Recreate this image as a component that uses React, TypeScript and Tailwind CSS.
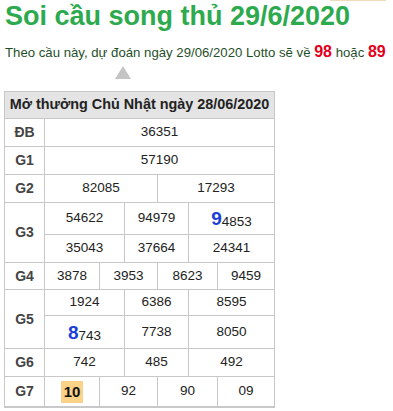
import React from "react";

type Cell = { v: string; w: number; hl?: "big" | "tag" };

const ROWS: { label: string; lines: Cell[][]; heights: number[] }[] = [
  { label: "ĐB", lines: [[{ v: "36351", w: 229 }]], heights: [27] },
  { label: "G1", lines: [[{ v: "57190", w: 229 }]], heights: [27] },
  {
    label: "G2",
    lines: [[{ v: "82085", w: 113 }, { v: "17293", w: 116 }]],
    heights: [27],
  },
  {
    label: "G3",
    lines: [
      [
        { v: "54622", w: 80 },
        { v: "94979", w: 64 },
        { v: "94853", w: 85, hl: "big" },
      ],
      [
        { v: "35043", w: 80 },
        { v: "37664", w: 64 },
        { v: "24341", w: 85 },
      ],
    ],
    heights: [32, 27],
  },
  {
    label: "G4",
    lines: [
      [
        { v: "3878", w: 55 },
        { v: "3953", w: 58 },
        { v: "8623", w: 60 },
        { v: "9459", w: 56 },
      ],
    ],
    heights: [26],
  },
  {
    label: "G5",
    lines: [
      [
        { v: "1924", w: 80 },
        { v: "6386", w: 64 },
        { v: "8595", w: 85 },
      ],
      [
        { v: "8743", w: 80, hl: "big" },
        { v: "7738", w: 64 },
        { v: "8050", w: 85 },
      ],
    ],
    heights: [26, 32],
  },
  {
    label: "G6",
    lines: [
      [
        { v: "742", w: 80 },
        { v: "485", w: 64 },
        { v: "492", w: 85 },
      ],
    ],
    heights: [27],
  },
  {
    label: "G7",
    lines: [
      [
        { v: "10", w: 55, hl: "tag" },
        { v: "92", w: 58 },
        { v: "90", w: 60 },
        { v: "09", w: 56 },
      ],
    ],
    heights: [29],
  },
];

function CellValue({ cell }: { cell: Cell }) {
  if (cell.hl === "big") {
    return (
      <span className="leading-none">
        <span className="text-[19px] font-bold text-[#1c3fd8]">{cell.v[0]}</span>
        <span className="relative top-[1px]">{cell.v.slice(1)}</span>
      </span>
    );
  }
  if (cell.hl === "tag") {
    return (
      <span className="bg-[#fbd288] px-[3px] py-[1px] text-[15px] leading-[20px] font-bold text-[#111]">
        {cell.v}
      </span>
    );
  }
  return <span>{cell.v}</span>;
}

export default function App() {
  return (
    <div
      className="relative w-[393px] h-[411px] bg-white overflow-hidden"
      style={{ fontFamily: '"Liberation Sans", Arial, sans-serif' }}
    >
      <div className="absolute top-0 left-[330px] w-[56px] h-[1px] bg-[#efdcb8]" />
      <h1 className="pl-[5px] text-[27px] font-bold leading-[32px] text-[#2eaa4e] whitespace-nowrap">
        Soi cầu song thủ 29/6/2020
      </h1>
      <p className="pl-[5px] mt-[11px] h-[20px] text-[13.2px] leading-[20px] text-[#1f4f2a] whitespace-nowrap">
        Theo cầu này, dự đoán ngày 29/06/2020 Lotto sẽ về{" "}
        <span className="text-[16px] leading-none font-bold text-[#e3001b]">98</span> hoặc{" "}
        <span className="text-[16px] leading-none font-bold text-[#e3001b]">89</span>
      </p>
      <div className="ml-[115px] mt-[3px] w-0 h-0 border-l-[8px] border-r-[8px] border-b-[13px] border-l-transparent border-r-transparent border-b-[#c4c4c4]" />

      <div className="ml-[4px] mt-[12px] w-[271px] border border-[#c8c8c8] border-b-2 text-[13.5px] text-[#222]">
        <div className="h-[27px] bg-[#e4e4e4] border-b border-[#c8c8c8] flex items-center justify-center font-bold text-[14.4px] text-[#222] whitespace-nowrap">
          Mở thưởng Chủ Nhật ngày 28/06/2020
        </div>
        {ROWS.map((row, ri) => (
          <div
            key={row.label}
            className={`flex ${ri < ROWS.length - 1 ? "border-b border-[#c8c8c8]" : ""}`}
          >
            <div className="w-[40px] shrink-0 border-r border-[#c8c8c8] flex items-center justify-center font-bold text-[#444] text-[14px]">
              {row.label}
            </div>
            <div className="flex-1 flex flex-col">
              {row.lines.map((line, li) => (
                <div
                  key={li}
                  className={`flex ${li < row.lines.length - 1 ? "border-b border-[#c8c8c8]" : ""}`}
                  style={{ height: row.heights[li] }}
                >
                  {line.map((cell, ci) => (
                    <div
                      key={ci}
                      className={`flex items-center justify-center ${ci < line.length - 1 ? "border-r border-[#c8c8c8]" : "flex-1"}`}
                      style={ci < line.length - 1 ? { width: cell.w } : undefined}
                    >
                      <CellValue cell={cell} />
                    </div>
                  ))}
                </div>
              ))}
            </div>
          </div>
        ))}
      </div>
    </div>
  );
}
